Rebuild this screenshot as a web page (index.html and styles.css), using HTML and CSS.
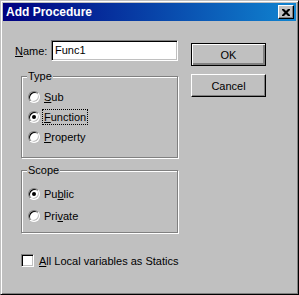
FILE: index.html
```html
<!DOCTYPE html>
<html lang="en">
<head>
  <meta charset="UTF-8">
  <title>Add Procedure</title>
  <link rel="stylesheet" href="styles.css">
</head>
<body>
  <div class="window">
    <div class="titlebar">
      <span class="title">Add Procedure</span>
      <button class="close">
        <svg width="8" height="7" viewBox="0 0 8 7"><path d="M0 0h2l2 2 2-2h2v1L5.5 3.5 8 6v1H6L4 5 2 7H0V6l2.5-2.5L0 1z" fill="#000"/></svg>
      </button>
    </div>

    <div class="client">
      <div class="main">
        <div class="name-row">
          <label><u>N</u>ame:</label>
          <div class="textbox">Func1</div>
        </div>

        <!-- Type -->
        <fieldset class="group type">
          <legend>Type</legend>
          <div class="option"><span class="radio"></span><span class="text"><u>S</u>ub</span></div>
          <div class="option"><span class="radio checked"></span><span class="text focus"><u>F</u>unction</span></div>
          <div class="option"><span class="radio"></span><span class="text"><u>P</u>roperty</span></div>
        </fieldset>

        <!-- Scope -->
        <fieldset class="group scope">
          <legend>Scope</legend>
          <div class="option"><span class="radio checked"></span><span class="text">Pu<u>b</u>lic</span></div>
          <div class="option"><span class="radio"></span><span class="text">Pri<u>v</u>ate</span></div>
        </fieldset>

        <div class="check-row">
          <span class="checkbox"></span>
          <span class="text"><u>A</u>ll Local variables as Statics</span>
        </div>
      </div>

      <div class="buttons">
        <button class="btn default">OK</button>
        <button class="btn">Cancel</button>
      </div>
    </div>
  </div>
</body>
</html>
```

FILE: styles.css
```css
body {
  margin: 0;
  background: #c0c0c0;
  font-family: "Liberation Sans", Arial, sans-serif;
  font-size: 11px;
  color: #000;
}
.window {
  width: 299px;
  height: 295px;
  box-sizing: border-box;
  background: #c0c0c0;
  border: 1px solid;
  border-color: #c0c0c0 #000 #000 #c0c0c0;
  box-shadow: inset 1px 1px 0 #fff, inset -1px -1px 0 #808080;
  padding: 2px;
}
.titlebar {
  height: 18px;
  display: flex;
  align-items: center;
  justify-content: space-between;
  padding-left: 3px;
  background: linear-gradient(to right, #000080, #1084d0);
}
.title {
  color: #fff;
  font-weight: bold;
  font-size: 12px;
}
.close {
  width: 16px;
  height: 14px;
  margin-right: 2px;
  padding: 0;
  display: flex;
  align-items: center;
  justify-content: center;
  background: #c0c0c0;
  border: 1px solid;
  border-color: #fff #000 #000 #fff;
  box-shadow: inset -1px -1px 0 #808080;
}
.client {
  display: flex;
  padding: 19px 0 0 12px;
}
.main { width: 163px; }
.name-row {
  display: flex;
  align-items: center;
  height: 21px;
}
.name-row label { width: 36px; }
.textbox {
  width: 127px;
  height: 21px;
  box-sizing: border-box;
  background: #fff;
  border: 1px solid;
  border-color: #808080 #fff #fff #808080;
  box-shadow: inset 1px 1px 0 #000, inset -1px -1px 0 #c0c0c0;
  padding: 0 3px;
  line-height: 19px;
}
.group {
  margin: 0 0 0 6px;
  width: 157px;
  box-sizing: border-box;
  border: 1px solid #808080;
  box-shadow: 1px 1px 0 #fff, inset 1px 1px 0 #fff;
  padding: 0 0 0 6px;
  min-width: 0;
}
.group legend {
  margin-left: -1px;
  padding: 0 1px;
  line-height: 13px;
  background: #c0c0c0;
}
.type { margin-top: 9px; padding-top: 4px; padding-bottom: 10px; }
.type .option { height: 20px; }
.scope { margin-top: 6px; padding-top: 6px; padding-bottom: 5px; }
.scope .option { height: 22px; }
.option {
  display: flex;
  align-items: center;
  gap: 4px;
}
.radio {
  width: 12px;
  height: 12px;
  box-sizing: border-box;
  border-radius: 50%;
  background: #fff;
  border: 1px solid;
  border-color: #808080 #fff #fff #808080;
  box-shadow: inset 1px 1px 0 #000, inset -1px -1px 0 #c0c0c0;
  display: flex;
  align-items: center;
  justify-content: center;
}
.radio.checked::after {
  content: "";
  width: 4px;
  height: 4px;
  border-radius: 50%;
  background: #000;
}
.text { line-height: 14px; white-space: nowrap; }
.focus {
  outline: 1px dotted #000;
  outline-offset: 0;
  margin-left: -1px;
  padding: 0 1px;
}
.check-row {
  display: flex;
  align-items: center;
  gap: 5px;
  margin: 21px 0 0 6px;
  height: 13px;
}
.checkbox {
  flex: none;
  width: 13px;
  height: 13px;
  box-sizing: border-box;
  background: #fff;
  border: 1px solid;
  border-color: #808080 #fff #fff #808080;
  box-shadow: inset 1px 1px 0 #000, inset -1px -1px 0 #c0c0c0;
}
.buttons {
  display: flex;
  flex-direction: column;
  gap: 8px;
  margin-left: 13px;
  padding-top: 3px;
}
.btn {
  width: 75px;
  height: 23px;
  padding: 0;
  font-family: inherit;
  font-size: 11px;
  color: #000;
  background: #c0c0c0;
  border: 1px solid;
  border-color: #fff #000 #000 #fff;
  box-shadow: inset -1px -1px 0 #808080;
}
.btn.default {
  border-color: #000;
  box-shadow: inset 1px 1px 0 #fff, inset -2px -2px 0 #808080;
}
```
